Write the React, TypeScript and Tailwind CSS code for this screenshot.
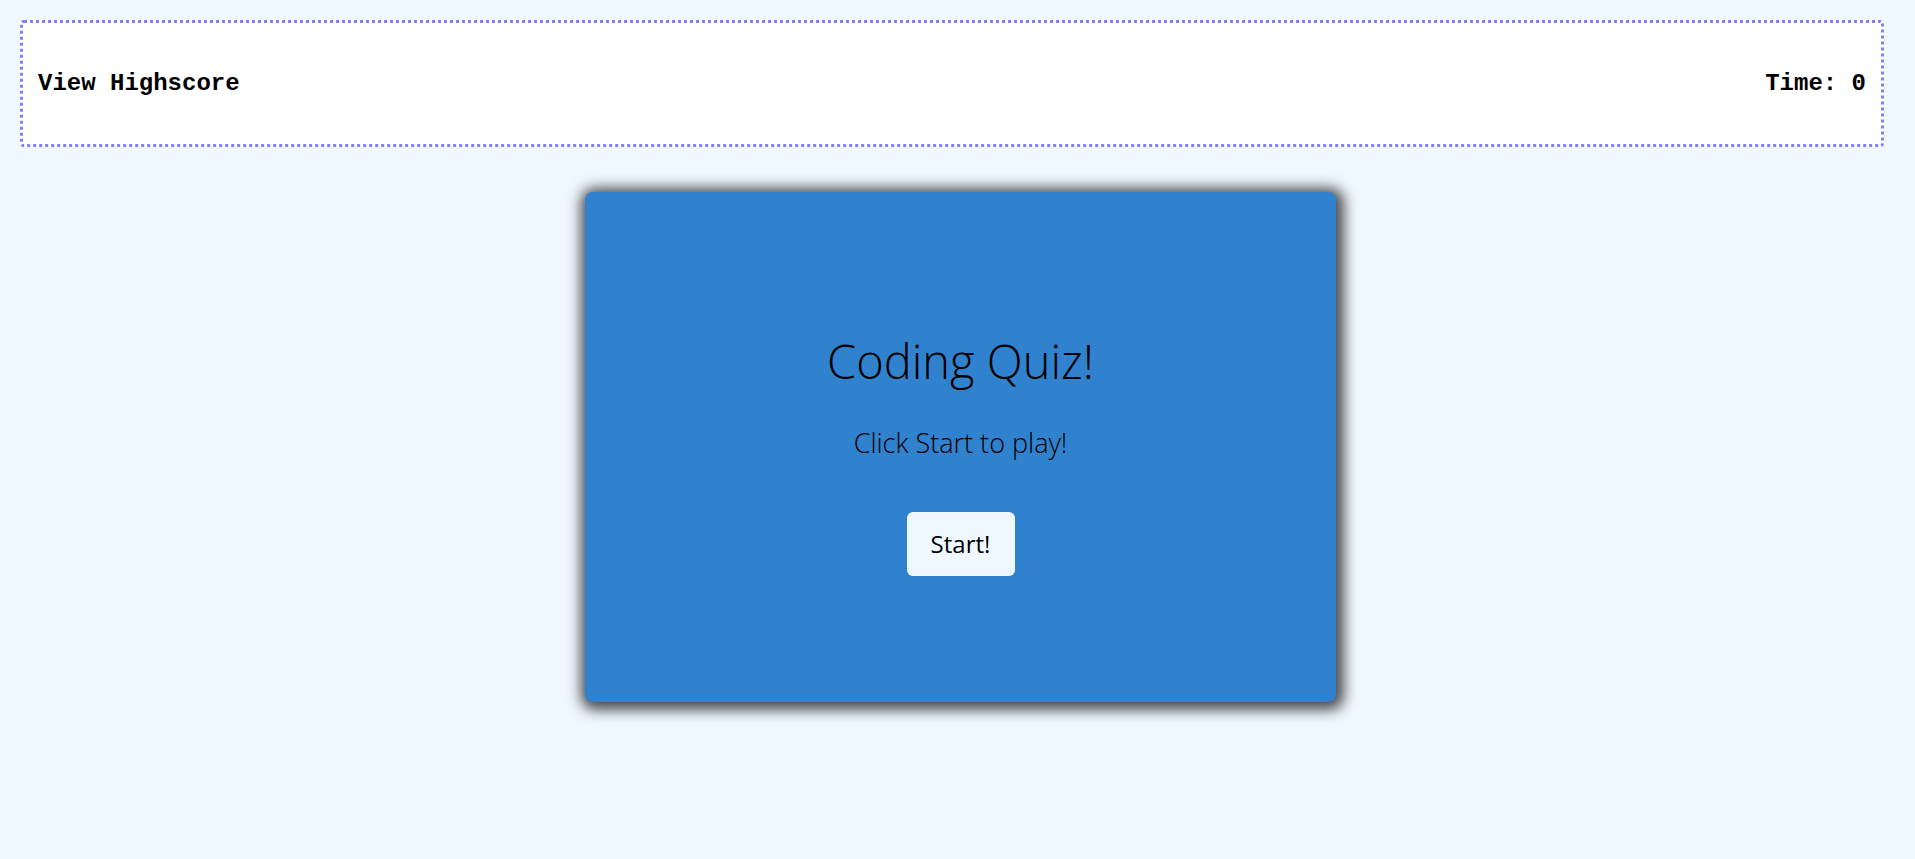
export default function App() {
  return (
    <div className="min-h-[859px] w-full bg-[#f0f8ff] pt-5">
      <header className="ml-5 flex h-[127px] w-[1864px] items-center justify-between rounded-[4px] border-[3px] border-dotted border-[#7f7fff] bg-white px-[15px] font-['Liberation_Mono',monospace] text-[24px] font-bold text-black">
        <span>View Highscore</span>
        <span>Time: 0</span>
      </header>

      <main className="flex justify-center pt-[45px]">
        <div className="ml-[6px] flex h-[510px] w-[751px] flex-col items-center justify-center rounded-[8px] bg-[#3182ce] pt-[20px] font-['Open_Sans',sans-serif] text-black shadow-[2px_2px_14px_6px_rgba(0,0,0,0.7)]">
          <h1 className="text-[47px] leading-none font-light">Coding Quiz!</h1>
          <p className="mt-[38px] text-[27px] font-light">Click Start to play!</p>
          <button className="mt-[49px] h-[64px] w-[108px] rounded-[6px] bg-[#f0f8ff] text-[24px] text-black">
            Start!
          </button>
        </div>
      </main>
    </div>
  );
}
